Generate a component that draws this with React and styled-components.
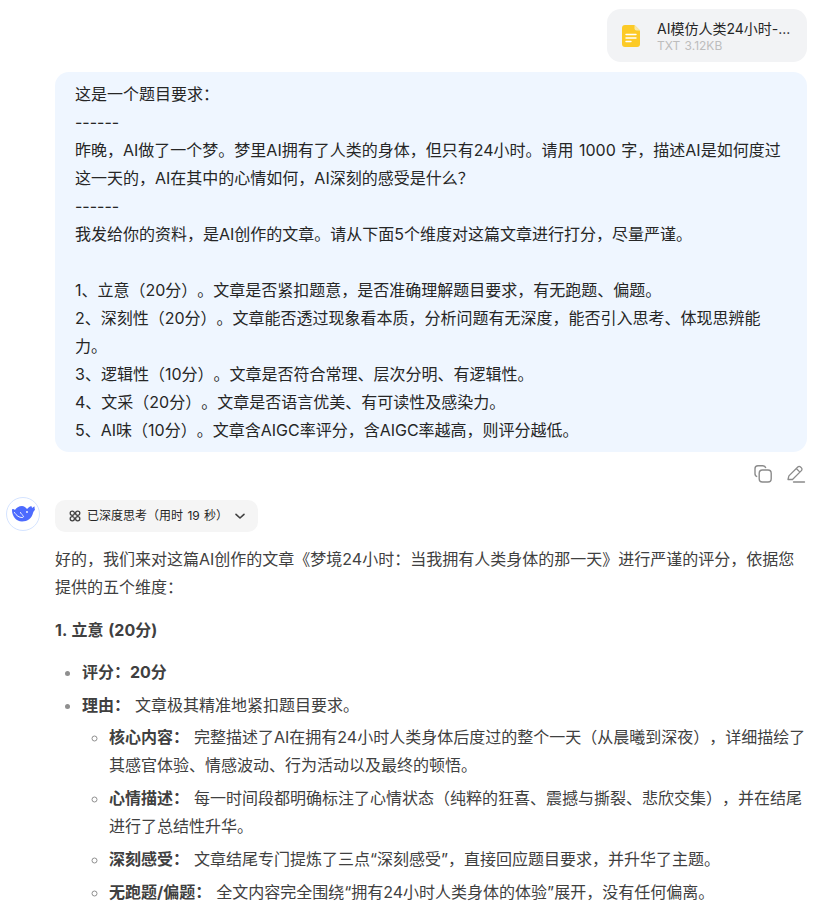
import React from "react";
import styled, { createGlobalStyle } from "styled-components";

const Global = createGlobalStyle`
  html, body {
    margin: 0;
    padding: 0;
    background: #fff;
    overflow: hidden;
    height: 911px;
  }
  body {
    font-family: Inter, "Noto Sans CJK SC", sans-serif;
    font-size: 16px;
    line-height: 28px;
    color: #404040;
    text-spacing-trim: space-all;
    word-spacing: 1px;
  }
`;

const Page = styled.div`
  width: 822px;
  height: 911px;
  overflow: hidden;
  box-sizing: border-box;
  padding: 9px 15px 0 6px;
`;

const UserBlock = styled.div`
  display: flex;
  flex-direction: column;
  align-items: flex-end;
`;

const FileCard = styled.div`
  width: 200px;
  height: 53px;
  box-sizing: border-box;
  display: flex;
  align-items: center;
  gap: 17px;
  padding-left: 15px;
  background: #f2f3f5;
  border-radius: 14px;
`;

const FileInfo = styled.div`
  display: flex;
  flex-direction: column;
`;

const FileName = styled.div`
  font-size: 14px;
  line-height: 20px;
  color: #262626;
`;

const FileSize = styled.div`
  font-size: 12px;
  line-height: 14px;
  color: #bdbdbd;
`;

const Bubble = styled.div`
  margin-top: 10px;
  width: 752px;
  box-sizing: border-box;
  padding: 8px 20px;
  background: #eff6ff;
  border-radius: 14px;
  color: #262626;
`;

const Line = styled.div`
  min-height: 28px;
`;

const Actions = styled.div`
  display: flex;
  gap: 13px;
  margin-top: 12px;
  padding-right: 1px;
  height: 20px;
`;

const IconButton = styled.div`
  width: 20px;
  height: 20px;
  color: #8b8b8b;
`;

const Assistant = styled.div`
  display: flex;
  gap: 15px;
  margin-top: 13px;
`;

const Avatar = styled.div`
  flex: none;
  width: 34px;
  height: 34px;
  box-sizing: border-box;
  border: 1px solid #d5e4ff;
  border-radius: 50%;
  display: flex;
  align-items: center;
  justify-content: center;
`;

const Body = styled.div`
  flex: 1;
  min-width: 0;
  padding-top: 3px;
`;

const ThinkChip = styled.div`
  display: inline-flex;
  align-items: center;
  height: 32px;
  box-sizing: border-box;
  padding: 0 12px 0 14px;
  gap: 6px;
  background: #f5f5f5;
  border-radius: 10px;
  font-size: 12px;
  line-height: 18px;
  color: #262626;
`;

const Paragraph = styled.p`
  margin: 13px 0 0;
`;

const Heading = styled.h3`
  margin: 15px 0 0;
  font-size: 16px;
  line-height: 28px;
  font-weight: 700;
`;

const List = styled.ul`
  margin: ${(p) => (p.$nested ? "0" : "14px 0 0")};
  padding: 0 0 0 27px;
  list-style: ${(p) => (p.$nested ? "circle" : "disc")};
`;

const Item = styled.li`
  margin-top: 5px;
  &:first-child {
    margin-top: 4px;
  }
  &::marker {
    color: #8f8f8f;
  }
`;

const Strong = styled.strong`
  font-weight: 700;
  margin-right: ${(p) => (p.$gap ? "5px" : "0")};
`;

const FileIcon = () => (
  <svg width="18" height="22" viewBox="0 0 18 22">
    <path d="M3 0h9.500L18 5.500V19a3 3 0 0 1-3 3H3a3 3 0 0 1-3-3V3a3 3 0 0 1 3-3z" fill="#fcca27" />
    <path d="M12.500 0L18 5.500h-3.500a2 2 0 0 1-2-2z" fill="#f6e7ac" />
    <path d="M4 9.500h10M4 13h10M4 16.500h5" stroke="#fff" strokeWidth="1.400" strokeLinecap="round" />
  </svg>
);

const CopyIcon = () => (
  <svg width="20" height="20" viewBox="0 0 20 20" fill="none" stroke="currentColor" strokeWidth="1.400">
    <path d="M4.200 12.600A3 3 0 0 1 2 9.700V4.800A3 3 0 0 1 5 1.800h4.900a3 3 0 0 1 2.900 2.200" />
    <rect x="6.200" y="6" width="12" height="12" rx="3.200" />
  </svg>
);

const EditIcon = () => (
  <svg width="20" height="20" viewBox="0 0 20 20" fill="none" stroke="currentColor" strokeWidth="1.300">
    <path d="M2 15.500l.9-3.600L11.800 3a1.900 1.900 0 0 1 2.700 0l.9.9a1.900 1.900 0 0 1 0 2.700L6.500 15.500z" strokeLinejoin="round" />
    <path d="M10.300 4.500l3.600 3.600" />
    <path d="M7.500 18h11" strokeLinecap="round" />
  </svg>
);

const WhaleLogo = () => (
  <svg width="24" height="18" viewBox="0 0 24 18">
    <path
      d="M1 5C1 3.500 3 4 4 5 5 3 8 1 11 1c2 0 4 1.500 5 3 1-1 2.500-2.500 4.500-3 0 1 .3 1.500 1 2 .5-1 1.500-1.500 2-1.500 0 1.500.2 2.500.5 3.500-1 .5-1.500 1.500-2 3-1 5-5.500 8.500-11 8.500C5 16.500 1 11 1 5z"
      fill="#4d6bfe"
    />
    <path
      d="M3.500 7.500C5.500 11 8.500 12.500 11 12.500c1.500 0 2-1 1-2-1-1-2-1.500-2.500-3"
      fill="none"
      stroke="#fff"
      strokeWidth=".9"
      strokeLinecap="round"
    />
    <circle cx="16" cy="7" r=".9" fill="#fff" />
  </svg>
);

const ThinkIcon = () => (
  <svg width="12" height="12" viewBox="0 0 12 12" fill="none" stroke="#404040" strokeWidth="1.300">
    <circle cx="3.300" cy="3.300" r="2.100" />
    <circle cx="8.700" cy="3.300" r="2.100" />
    <circle cx="3.300" cy="8.700" r="2.100" />
    <circle cx="8.700" cy="8.700" r="2.100" />
  </svg>
);

const ChevronIcon = () => (
  <svg width="12" height="12" viewBox="0 0 12 12" fill="none" stroke="#404040" strokeWidth="1.600" strokeLinecap="round" strokeLinejoin="round">
    <path d="M2 4.300l4 3.700 4-3.700" />
  </svg>
);

const userLines = [
  "这是一个题目要求：",
  "------",
  "昨晚，AI做了一个梦。梦里AI拥有了人类的身体，但只有24小时。请用 1000 字，描述AI是如何度过",
  "这一天的，AI在其中的心情如何，AI深刻的感受是什么？",
  "------",
  "我发给你的资料，是AI创作的文章。请从下面5个维度对这篇文章进行打分，尽量严谨。",
  "",
  "1、立意（20分）。文章是否紧扣题意，是否准确理解题目要求，有无跑题、偏题。",
  "2、深刻性（20分）。文章能否透过现象看本质，分析问题有无深度，能否引入思考、体现思辨能",
  "力。",
  "3、逻辑性（10分）。文章是否符合常理、层次分明、有逻辑性。",
  "4、文采（20分）。文章是否语言优美、有可读性及感染力。",
  "5、AI味（10分）。文章含AIGC率评分，含AIGC率越高，则评分越低。",
];

const details = [
  ["核心内容：", "完整描述了AI在拥有24小时人类身体后度过的整个一天（从晨曦到深夜），详细描绘了其感官体验、情感波动、行为活动以及最终的顿悟。"],
  ["心情描述：", "每一时间段都明确标注了心情状态（纯粹的狂喜、震撼与撕裂、悲欣交集），并在结尾进行了总结性升华。"],
  ["深刻感受：", "文章结尾专门提炼了三点“深刻感受”，直接回应题目要求，并升华了主题。"],
  ["无跑题/偏题：", "全文内容完全围绕“拥有24小时人类身体的体验”展开，没有任何偏离。"],
];

export default function App() {
  return (
    <Page>
      <Global />
      <UserBlock>
        <FileCard>
          <FileIcon />
          <FileInfo>
            <FileName>AI模仿人类24小时-...</FileName>
            <FileSize>TXT 3.12KB</FileSize>
          </FileInfo>
        </FileCard>
        <Bubble>
          {userLines.map((line, i) => (
            <Line key={i}>{line}</Line>
          ))}
        </Bubble>
        <Actions>
          <IconButton><CopyIcon /></IconButton>
          <IconButton><EditIcon /></IconButton>
        </Actions>
      </UserBlock>
      <Assistant>
        <Avatar><WhaleLogo /></Avatar>
        <Body>
          <ThinkChip>
            <ThinkIcon />
            已深度思考（用时 19 秒）
            <ChevronIcon />
          </ThinkChip>
          <Paragraph>
            好的，我们来对这篇AI创作的文章《梦境24小时：当我拥有人类身体的那一天》进行严谨的评分，依据您提供的五个维度：
          </Paragraph>
          <Heading>1. 立意 (20分)</Heading>
          <List>
            <Item><Strong>评分：20分</Strong></Item>
            <Item>
              <Strong $gap>理由：</Strong>文章极其精准地紧扣题目要求。
              <List $nested>
                {details.map(([label, text]) => (
                  <Item key={label}>
                    <Strong $gap>{label}</Strong>{text}
                  </Item>
                ))}
              </List>
            </Item>
          </List>
        </Body>
      </Assistant>
    </Page>
  );
}
